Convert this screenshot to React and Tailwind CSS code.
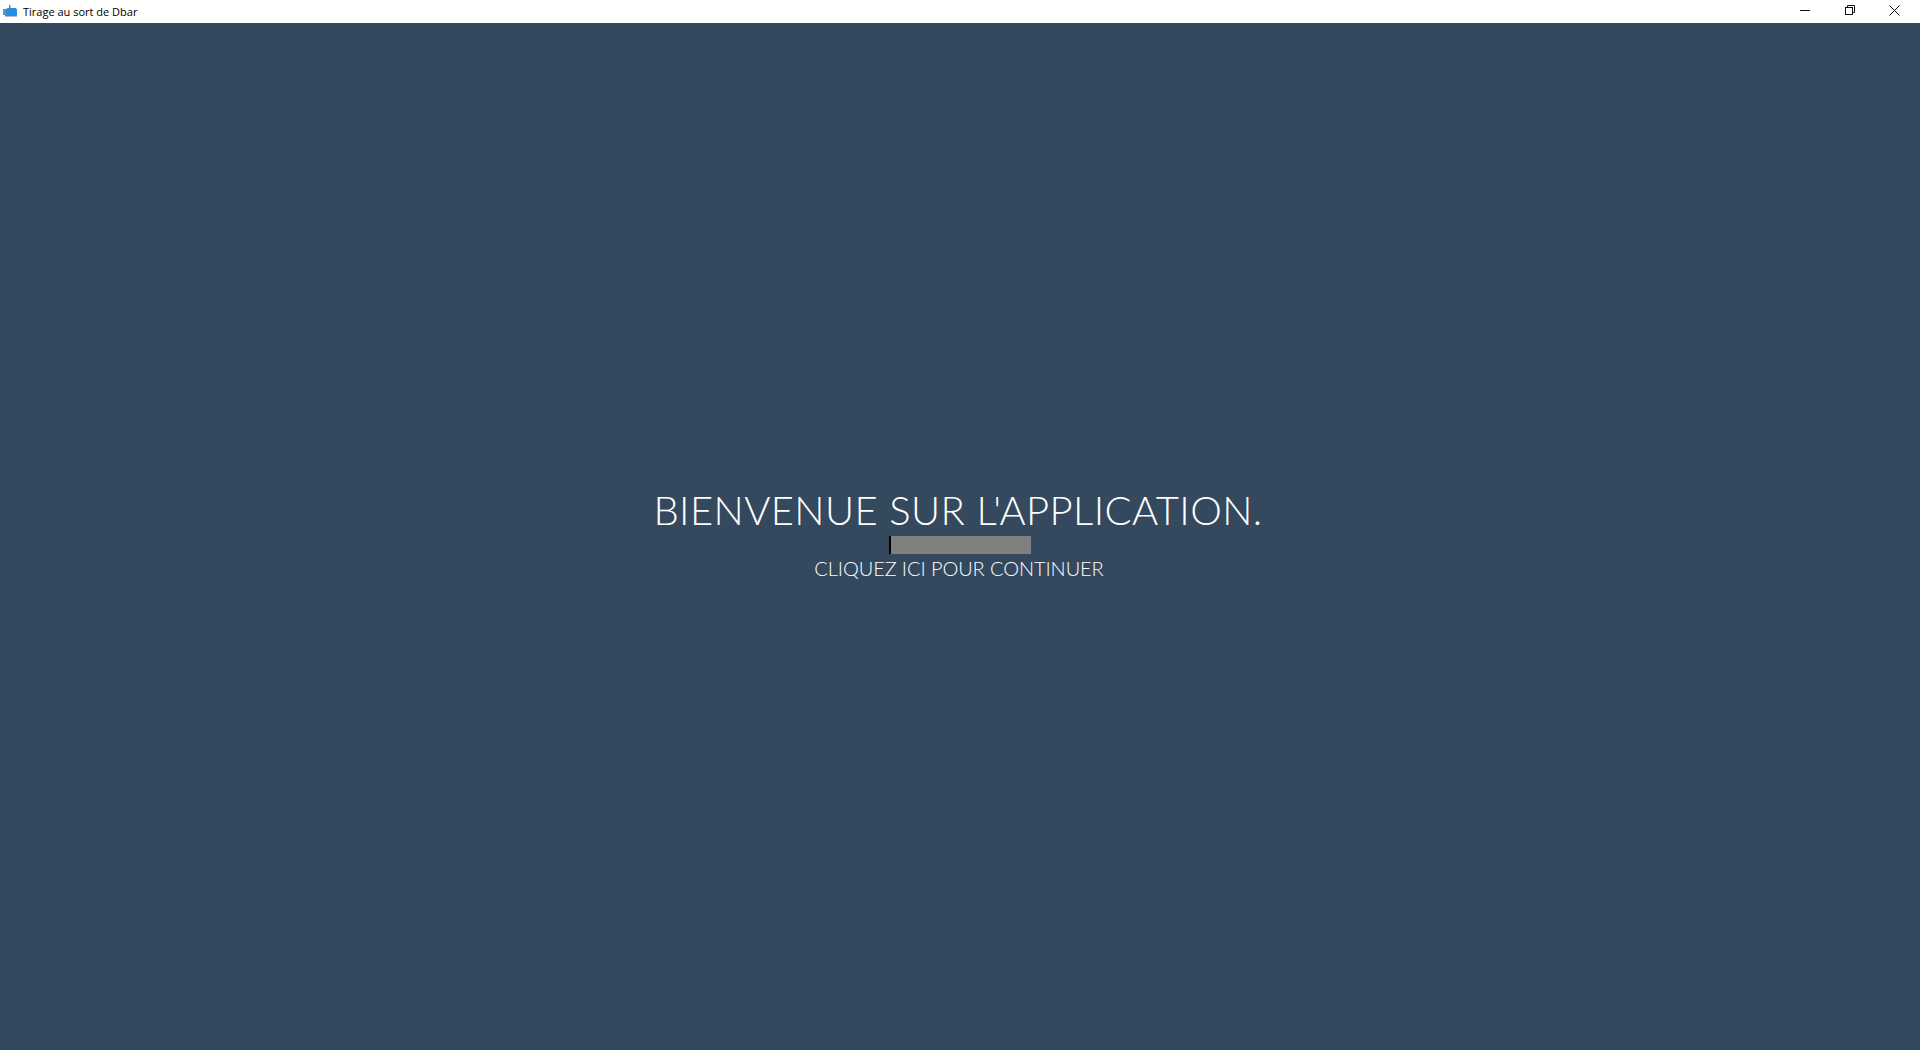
function MailboxIcon() {
  return (
    <svg width="14" height="13" viewBox="0 0 14 13" className="shrink-0">
      <rect x="0" y="4" width="7" height="6" fill="#6f8fb0" />
      <rect x="3" y="3" width="11" height="8" rx="2" fill="#1e90e8" />
      <rect x="6" y="0" width="1.5" height="5" fill="#d9503f" />
      <rect x="2" y="10" width="12" height="1.5" fill="#5d7ea3" />
    </svg>
  );
}

function MinimizeIcon() {
  return (
    <svg width="10" height="10" viewBox="0 0 10 10" fill="none" stroke="#111" strokeWidth="1">
      <path d="M0 5.5H10" />
    </svg>
  );
}

function RestoreIcon() {
  return (
    <svg width="10" height="10" viewBox="0 0 10 10" fill="none" stroke="#111" strokeWidth="1">
      <rect x="0.5" y="2.5" width="7" height="7" />
      <path d="M2.5 2.5V0.5H9.5V7.5H7.5" />
    </svg>
  );
}

function CloseIcon() {
  return (
    <svg width="11" height="11" viewBox="0 0 11 11" fill="none" stroke="#111" strokeWidth="1">
      <path d="M0.5 0.5L10.5 10.5M10.5 0.5L0.5 10.5" />
    </svg>
  );
}

export default function App() {
  return (
    <div className="flex h-[1050px] w-[1920px] flex-col overflow-hidden bg-[#34495e] font-['Lato',sans-serif]">
      <header className="flex h-[23px] shrink-0 items-center justify-between bg-white">
        <div className="flex items-center gap-[6px] pl-[3px]">
          <MailboxIcon />
          <span className="font-['Open_Sans',sans-serif] text-[11px] leading-none text-black">Tirage au sort de Dbar</span>
        </div>
        <div className="flex h-full items-center pr-[3px] pb-[3px]">
          <span className="flex h-full w-[45px] items-center justify-center"><MinimizeIcon /></span>
          <span className="flex h-full w-[45px] items-center justify-center"><RestoreIcon /></span>
          <span className="flex h-full w-[45px] items-center justify-center"><CloseIcon /></span>
        </div>
      </header>

      <main className="flex flex-col items-center pt-[463px] pr-[4px]">
        <h1 className="text-[40px] leading-[48px] font-light tracking-[0.4px] text-white">BIENVENUE SUR L'APPLICATION.</h1>
        <div className="mt-[2px] ml-[4px] h-[18px] w-[142px] border-l-2 border-black bg-[#808080]" />
        <p className="ml-[2px] text-[20px] leading-[28px] font-light tracking-[-0.08px] text-white">CLIQUEZ ICI POUR CONTINUER</p>
      </main>
    </div>
  );
}
